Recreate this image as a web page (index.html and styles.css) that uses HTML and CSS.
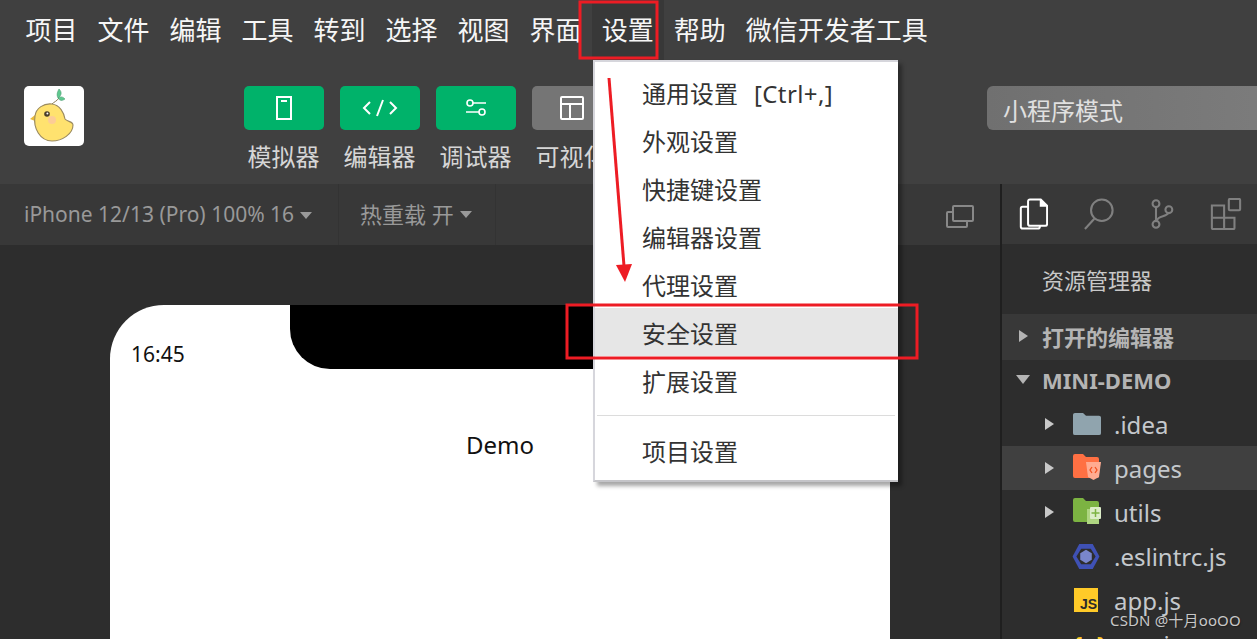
FILE: index.html
```html
<!DOCTYPE html>
<html lang="zh-CN">
<head>
<meta charset="utf-8">
<title>微信开发者工具</title>
<link rel="stylesheet" href="styles.css">
</head>
<body>
<div class="app">
  <nav class="menubar">
    <span class="menu-item">项目</span><span class="menu-item">文件</span><span class="menu-item">编辑</span><span class="menu-item">工具</span><span class="menu-item">转到</span><span class="menu-item">选择</span><span class="menu-item">视图</span><span class="menu-item">界面</span><span class="menu-item active">设置</span><span class="menu-item">帮助</span><span class="menu-item">微信开发者工具</span>
  </nav>
  <header class="toolbar">
    <div class="logo">
      <svg width="60" height="60" viewBox="0 0 60 60">
        <path d="M28 18 C30 16 33 15 35 12" fill="none" stroke="#8a7a50" stroke-width="1"/>
        <path d="M34 12 C32 8 34 5 35 3 C38 6 38 9 34 12Z" fill="#5ec98f" stroke="#4a9a70" stroke-width=".6"/>
        <path d="M34 12 C37 10 39 11 41 13 C38 15 36 15 34 12Z" fill="#5ec98f" stroke="#4a9a70" stroke-width=".6"/>
        <path d="M11 35 L6 33 L11 29Z" fill="#e8b93a"/>
        <path d="M11 30 C12 22 20 17 28 18 C36 19 40 27 41 33 C43 36 49 35 49 39 C49 48 38 55 28 55 C16 55 9 42 11 30Z" fill="#ffe26f" stroke="#9a8a60" stroke-width="1.100"/>
        <circle cx="23" cy="28" r="2.800" fill="#4a3c28"/>
        <circle cx="23.400" cy="27.400" r="1" fill="#fff"/>
        <circle cx="28" cy="34" r="4" fill="#fbc7a0" opacity=".8"/>
      </svg>
    </div>
    <div class="tool">
      <div class="tool-btn green">
        <svg width="18" height="26" viewBox="0 0 18 26" fill="none" stroke="#fff" stroke-width="2"><rect x="2" y="2" width="14" height="22"/><path d="M6 6h6"/></svg>
      </div>
      <span class="tool-label">模拟器</span>
    </div>
    <div class="tool">
      <div class="tool-btn green">
        <svg width="36" height="18" viewBox="0 0 36 18" fill="none" stroke="#fff" stroke-width="2"><path d="M8 3L2 9l6 6M28 3l6 6-6 6M21 1l-6 16"/></svg>
      </div>
      <span class="tool-label">编辑器</span>
    </div>
    <div class="tool">
      <div class="tool-btn green">
        <svg width="22" height="18" viewBox="0 0 22 18" fill="none" stroke="#fff" stroke-width="1.600"><circle cx="5" cy="4" r="3"/><path d="M8 4h13M1 13h13"/><circle cx="17" cy="13" r="3"/></svg>
      </div>
      <span class="tool-label">调试器</span>
    </div>
    <div class="tool">
      <div class="tool-btn gray">
        <svg width="26" height="26" viewBox="0 0 26 26" fill="none" stroke="#fff" stroke-width="2"><rect x="2" y="2" width="22" height="22" rx="1"/><path d="M2 9h22M11 9v15"/></svg>
      </div>
      <span class="tool-label">可视化</span>
    </div>
    <div class="mode">小程序模式</div>
  </header>
  <div class="workspace">
    <section class="stage">
      <div class="subbar">
        <div class="sub-cell device">iPhone 12/13 (Pro) 100% 16<i class="caret"></i></div>
        <div class="sub-cell reload">热重载 开<i class="caret"></i></div>
        <svg class="window-icon" width="30" height="26" viewBox="0 0 30 26" fill="none" stroke="#888" stroke-width="2"><rect x="8" y="2" width="20" height="15" rx="1"/><path d="M8 8H3a1 1 0 0 0-1 1v13a1 1 0 0 0 1 1h18a1 1 0 0 0 1-1v-5"/></svg>
      </div>
      <div class="canvas">
        <div class="phone">
          <div class="status">
            <span class="time">16:45</span>
            <div class="notch"></div>
          </div>
          <div class="page-title">Demo</div>
        </div>
      </div>
    </section>
    <aside class="sidebar">
      <div class="side-tabs">
        <svg width="29" height="32" viewBox="0 0 32 34" fill="none" stroke="#fff" stroke-width="2.200"><path d="M12 1h12l7 7v20a2 2 0 0 1-2 2H12a2 2 0 0 1-2-2V3a2 2 0 0 1 2-2z"/><path d="M24 1v7h7" fill="#fff"/><path d="M10 9H4a2 2 0 0 0-2 2v20a2 2 0 0 0 2 2h17a2 2 0 0 0 2-2v-1"/></svg>
        <svg width="30" height="32" viewBox="0 0 32 34" fill="none" stroke="#808080" stroke-width="2.200"><circle cx="19" cy="13" r="11.500"/><path d="M11 22L1 33"/></svg>
        <svg width="24" height="32" viewBox="0 0 28 34" fill="none" stroke="#808080" stroke-width="2.400"><circle cx="7" cy="5" r="4"/><circle cx="7" cy="29" r="4"/><circle cx="22" cy="12" r="4"/><path d="M7 9v16M8 25c1-7 11-4 13-9"/></svg>
        <svg width="32" height="32" viewBox="0 0 34 34" fill="none" stroke="#808080" stroke-width="2.200"><rect x="20" y="1" width="12" height="12" rx="1"/><path d="M2 8h13v13H2zM2 21h13v12H3a1 1 0 0 1-1-1zM15 21h11v11a1 1 0 0 1-1 1H15z"/></svg>
      </div>
      <div class="side-title">资源管理器</div>
      <div class="section open-editors"><i class="arrow"></i>打开的编辑器</div>
      <div class="section project"><i class="arrow down"></i>MINI-DEMO</div>
      <ul class="tree">
        <li class="row"><i class="arrow light"></i>
          <svg class="file-icon" width="28" height="22" viewBox="0 0 28 24" preserveAspectRatio="none"><path d="M2 0h8l3 3h13a2 2 0 0 1 2 2v17a2 2 0 0 1-2 2H2a2 2 0 0 1-2-2V2a2 2 0 0 1 2-2z" fill="#90a4ae"/></svg>.idea</li>
        <li class="row selected"><i class="arrow light"></i>
          <svg class="file-icon" width="28" height="28" viewBox="0 0 28 28"><path d="M2 0h8l3 3h11a2 2 0 0 1 2 2v17a2 2 0 0 1-2 2H2a2 2 0 0 1-2-2V2a2 2 0 0 1 2-2z" fill="#ff7043"/><path d="M13 8h15l-2 15-5.500 3L15 23z" fill="#ffab91"/><path d="M19 13l-2 3 2 3M22 13l2 3-2 3" fill="none" stroke="#f4511e" stroke-width="1.300"/></svg>pages</li>
        <li class="row"><i class="arrow light"></i>
          <svg class="file-icon" width="28" height="28" viewBox="0 0 28 28"><path d="M2 0h8l3 3h11a2 2 0 0 1 2 2v17a2 2 0 0 1-2 2H2a2 2 0 0 1-2-2V2a2 2 0 0 1 2-2z" fill="#7cb342"/><rect x="14" y="11" width="12" height="15" fill="#aed581"/><rect x="17" y="9" width="11" height="12" rx="1" fill="#dcedc8"/><path d="M22.500 11v8M18.500 15h8" stroke="#7cb342" stroke-width="1.500"/></svg>utils</li>
        <li class="row"><span class="no-arrow"></span>
          <svg class="file-icon eslint-icon" width="28" height="25" viewBox="0 0 28 26"><path d="M7 0h14l7 13-7 13H7L0 13z" fill="#3f51b5"/><path d="M9 5h10l5 8-5 8H9l-5-8z" fill="#2d2d2d"/><path d="M14 6l6 3.500v7L14 20l-6-3.500v-7z" fill="#7986cb"/></svg>.eslintrc.js</li>
        <li class="row"><span class="no-arrow"></span>
          <svg class="file-icon js-icon" width="24" height="24" viewBox="0 0 24 24"><rect width="24" height="24" fill="#ffca28"/><text x="23" y="21" text-anchor="end" class="js-mark">JS</text></svg>app.js</li>
        <li class="row"><span class="no-arrow"></span>
          <span class="json-icon">{ }</span>app.json</li>
      </ul>
    </aside>
  </div>

  <div class="dropdown">
    <div class="drop-item">通用设置<span class="shortcut">[Ctrl+,]</span></div>
    <div class="drop-item">外观设置</div>
    <div class="drop-item">快捷键设置</div>
    <div class="drop-item">编辑器设置</div>
    <div class="drop-item">代理设置</div>
    <div class="drop-item hover">安全设置</div>
    <div class="drop-item">扩展设置</div>
    <div class="drop-sep"></div>
    <div class="drop-item">项目设置</div>
  </div>

  <svg class="annotations" width="1257" height="639" viewBox="0 0 1257 639" fill="none">
    <rect x="580" y="2" width="77" height="56" stroke="#ed1c24" stroke-width="3"/>
    <rect x="567" y="305" width="350" height="53" stroke="#ed1c24" stroke-width="3"/>
    <path d="M609 78L624 266" stroke="#ed1c24" stroke-width="3"/>
    <path d="M616 265L632 264L625 282Z" fill="#ed1c24"/>
  </svg>
  <div class="watermark">CSDN @十月ooOO</div>
</div>
</body>
</html>
```
FILE: styles.css
```css
* { box-sizing: border-box; }
html, body { margin: 0; padding: 0; }
body {
  width: 1257px;
  height: 639px;
  overflow: hidden;
  font-family: "Noto Sans", "Noto Sans CJK SC", sans-serif;
  background: #2d2d2d;
}
ul { list-style: none; margin: 0; padding: 0; }

.app {
  position: relative;
  width: 1257px;
  height: 639px;
  overflow: hidden;
  display: flex;
  flex-direction: column;
}

/* menu bar */
.menubar {
  height: 60px;
  flex: none;
  display: flex;
  padding-left: 16px;
  background: #404040;
}
.menu-item {
  padding: 0 10.500px 0 9.500px;
  font-size: 26px;
  line-height: 61px;
  color: #f6f6f6;
  white-space: nowrap;
}
.menu-item.active { background: #383838; }

/* toolbar */
.toolbar {
  height: 124px;
  flex: none;
  display: flex;
  align-items: flex-start;
  gap: 16px;
  padding: 26px 0 0 24px;
  background: #404040;
}
.logo {
  width: 60px;
  height: 60px;
  margin-right: 144px;
  background: #fff;
  border-radius: 5px;
}
.logo svg { display: block; }
.tool {
  width: 80px;
  display: flex;
  flex-direction: column;
  align-items: center;
}
.tool-btn {
  width: 80px;
  height: 44px;
  border-radius: 5px;
  display: flex;
  align-items: center;
  justify-content: center;
}
.tool-btn.green { background: #00b26a; }
.tool-btn.gray { background: #757575; }
.tool-label {
  margin-top: 9px;
  margin-right: 1px;
  font-size: 24px;
  line-height: 36px;
  color: #d6d6d6;
  white-space: nowrap;
}
.mode {
  width: 290px;
  height: 44px;
  margin-left: 359px;
  padding-left: 16px;
  flex: none;
  font-size: 24px;
  line-height: 50px;
  color: #e0e0e0;
  background: linear-gradient(90deg, #707070, #7c7c7c);
  border-radius: 6px;
}

/* workspace */
.workspace {
  flex: 1;
  min-height: 0;
  display: flex;
}
.stage {
  width: 1000px;
  flex: none;
  display: flex;
  flex-direction: column;
}
.subbar {
  height: 61px;
  flex: none;
  display: flex;
  align-items: stretch;
  background: #383838;
}
.sub-cell {
  display: flex;
  align-items: center;
  padding-bottom: 2px;
  font-size: 22px;
  color: #999;
  white-space: nowrap;
  border-right: 1px solid #333;
}
.device { width: 339px; padding-left: 24px; font-size: 21px; }
.reload { width: 157px; padding-left: 21px; padding-bottom: 4px; }
.caret {
  width: 0;
  height: 0;
  margin-left: 6px;
  margin-top: 3px;
  border-left: 6px solid transparent;
  border-right: 6px solid transparent;
  border-top: 7px solid #999;
}
.window-icon { margin: 20px 0 0 449px; }
.canvas {
  flex: 1;
  min-height: 0;
  padding: 60px 0 0 110px;
  background: #2d2d2d;
  overflow: hidden;
}
.phone {
  width: 780px;
  height: 420px;
  background: #fff;
  border-radius: 54px 54px 0 0;
}
.status {
  height: 64px;
  display: flex;
  align-items: flex-start;
}
.time {
  width: 180px;
  padding: 32px 0 0 21px;
  font-size: 21px;
  line-height: 34px;
  color: #111;
}
.notch {
  width: 420px;
  height: 64px;
  background: #000;
  border-radius: 0 0 40px 40px;
}
.page-title {
  margin-top: 58px;
  text-align: center;
  font-size: 24px;
  line-height: 36px;
  color: #111;
}

/* sidebar */
.sidebar {
  width: 257px;
  flex: none;
  padding-left: 2px;
  background: #2d2d2d;
  border-left: 2px solid #1f1f1f;
  overflow: hidden;
}
.side-tabs {
  height: 60px;
  display: flex;
  align-items: center;
  gap: 36px;
  padding-left: 17px;
  margin-left: -2px;
  background: #383838;
}
.side-title {
  height: 70px;
  margin-left: -2px;
  padding-left: 40px;
  font-size: 22px;
  line-height: 73px;
  color: #c8c8c8;
}
.section {
  display: flex;
  align-items: center;
  margin-left: -2px;
  padding-left: 17px;
  padding-bottom: 3px;
  font-size: 22px;
  font-weight: 700;
  color: #b4b4b4;
  white-space: nowrap;
}
.open-editors { height: 46px; background: #383838; }
.project { height: 42px; }
.arrow {
  width: 0;
  height: 0;
  margin-right: 14px;
  border-top: 6px solid transparent;
  border-bottom: 6px solid transparent;
  border-left: 9px solid #b4b4b4;
}
.arrow.down {
  margin-left: -3px;
  margin-right: 12px;
  border-left: 7px solid transparent;
  border-right: 7px solid transparent;
  border-top: 9px solid #b4b4b4;
  border-bottom: 0;
}
.row {
  height: 44px;
  margin-left: -2px;
  padding-left: 43px;
  display: flex;
  align-items: center;
  font-size: 24px;
  color: #c4c8cc;
  white-space: nowrap;
}
.row.selected { background: #404040; }
.row .arrow { margin-right: 19px; border-left-color: #c8c8c8; }
.no-arrow { width: 28px; flex: none; }
.file-icon { flex: none; margin-right: 13px; }
.eslint-icon { margin-left: -1px; margin-right: 14px; }
.js-icon { margin-left: 1px; margin-right: 16px; }
.js-mark {
  font-family: "Liberation Sans", sans-serif;
  font-size: 14px;
  font-weight: 700;
  fill: #2b2b2b;
}
.json-icon {
  width: 28px;
  margin-right: 13px;
  color: #ffca28;
  font-weight: 700;
  letter-spacing: 4px;
}

/* dropdown */
.dropdown {
  position: absolute;
  left: 593px;
  top: 60px;
  width: 305px;
  height: 422px;
  padding-top: 6px;
  background: #fff;
  border: 2px solid #d6d6dc;
  border-right: 0;
  border-bottom: 2px solid #c4c4c8;
  box-shadow: 4px 4px 4px rgba(0, 0, 0, .35);
}
.drop-item {
  height: 48px;
  padding-left: 47px;
  font-size: 24px;
  line-height: 51px;
  color: #333;
  white-space: nowrap;
}
.drop-item.hover { background: #e6e6e6; }
.shortcut { margin-left: 16px; letter-spacing: .4px; }
.drop-sep {
  height: 1px;
  margin: 11px 3px 10px 2px;
  background: #dcdcdc;
}

/* overlays */
.annotations {
  position: absolute;
  left: 0;
  top: 0;
  pointer-events: none;
}
.watermark {
  position: absolute;
  left: 1110px;
  top: 609px;
  font-size: 15px;
  line-height: 22px;
  letter-spacing: .15px;
  color: #c8c8c8;
  text-shadow: 1px 1px 1px #222;
  white-space: nowrap;
}
```
